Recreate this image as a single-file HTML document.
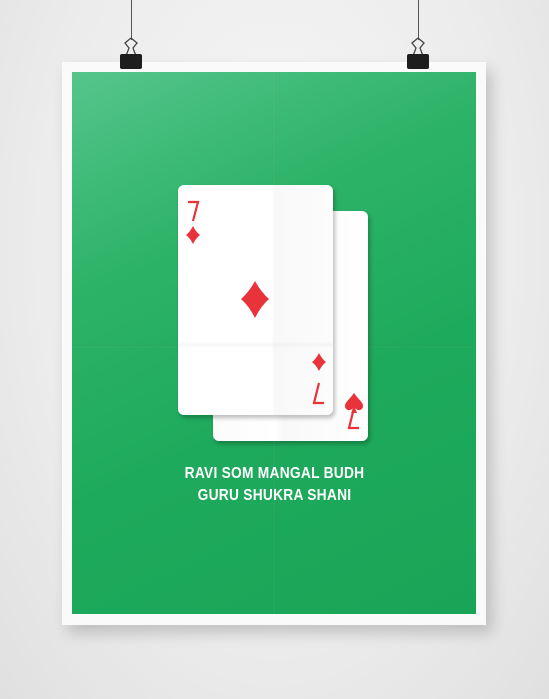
<!DOCTYPE html>
<html><head><style>
body{margin:0;width:549px;height:699px;overflow:hidden;background:radial-gradient(ellipse at 50% 35%,#f7f7f7 0%,#ececec 60%,#e0e0e0 100%);position:relative;font-family:"Liberation Sans",sans-serif}
.poster{position:absolute;left:62px;top:62px;width:424px;height:563px;background:#fafafa;box-shadow:6px 8px 14px rgba(0,0,0,.18)}
.green{position:absolute;left:10px;top:10px;width:404px;height:542px;background:linear-gradient(155deg,#55c58b 0%,#2db368 30%,#1eaa5c 60%,#1aa457 100%);overflow:hidden}
.fv{position:absolute;left:202px;top:0;width:2px;height:100%;background:linear-gradient(90deg,rgba(255,255,255,.06),rgba(0,0,0,.04))}
.fh{position:absolute;top:273px;left:0;height:2px;width:100%;background:linear-gradient(180deg,rgba(0,0,0,.05),rgba(255,255,255,.05))}
.card{position:absolute;width:155px;height:230px;background:#fff;border-radius:6px;box-shadow:2px 3px 4px rgba(0,0,0,.25)}
.wire{position:absolute;top:0;width:1px;height:40px;background:#555}
.txt{position:absolute;left:0;width:549px;text-align:center;color:#fff;font-weight:bold;font-size:16px;letter-spacing:0.3px;transform:scaleX(.86)}
</style></head><body>
<div class="wire" style="left:131px"></div>
<div class="wire" style="left:418px"></div>
<div class="poster"><div class="green"><div class="fv"></div><div class="fh"></div></div></div>
<svg style="position:absolute;left:0;top:0" width="549" height="80">
<g fill="none" stroke="#444" stroke-width="1.3"><path d="M131 38 l-6 5 4 5 -3 8 M131 38 l6 5 -4 5 3 8"/><path d="M418 38 l-6 5 4 5 -3 8 M418 38 l6 5 -4 5 3 8"/></g>
<rect x="120" y="54" width="22" height="15" rx="2" fill="#1e1e1e"/><rect x="407" y="54" width="22" height="15" rx="2" fill="#1e1e1e"/>
</svg>
<div class="card" style="left:213px;top:211px;background:linear-gradient(90deg,#fbfbfb,#fff 40%,#f8f8f8 45%,#fff 100%)"></div>
<div class="card" style="left:178px;top:185px;background:linear-gradient(180deg,rgba(0,0,0,0) 0%,rgba(0,0,0,0) 68%,rgba(0,0,0,.03) 69.5%,rgba(0,0,0,0) 71%),linear-gradient(90deg,#fff 0%,#fff 60%,#f8f8f8 62%,#fcfcfc 100%)"></div>
<svg style="position:absolute;left:0;top:0" width="549" height="699">
<g fill="#e8333a">
<path d="M193 226 Q196 232 200 235 Q196 238 193 244 Q190 238 186 235 Q190 232 193 226z"/>
<path d="M255 281 Q261 292 269 299 Q261 306 255 318 Q249 306 241 299 Q249 292 255 281z"/>
<path d="M319 353 Q322 359 326 362 Q322 365 319 371 Q316 365 312 362 Q316 359 319 353z"/>
<path d="M354 393 c-4 6 -9 9 -9 13 c0 4 5 6 8 2 l-2 5 h6 l-2 -5 c3 4 8 2 8 -2 c0 -4 -5 -7 -9 -13z"/>
</g>
<g fill="none" stroke="#e8333a" stroke-width="2.2">
<path d="M188 202 h10 l-5 19"/>
<path d="M324 403 h-10 l5 -20"/>
<path d="M359 428 h-10 l5 -20"/>
</g>
</svg>
<div class="txt" style="top:465px">RAVI SOM MANGAL BUDH</div>
<div class="txt" style="top:487px">GURU SHUKRA SHANI</div>
</body></html>
